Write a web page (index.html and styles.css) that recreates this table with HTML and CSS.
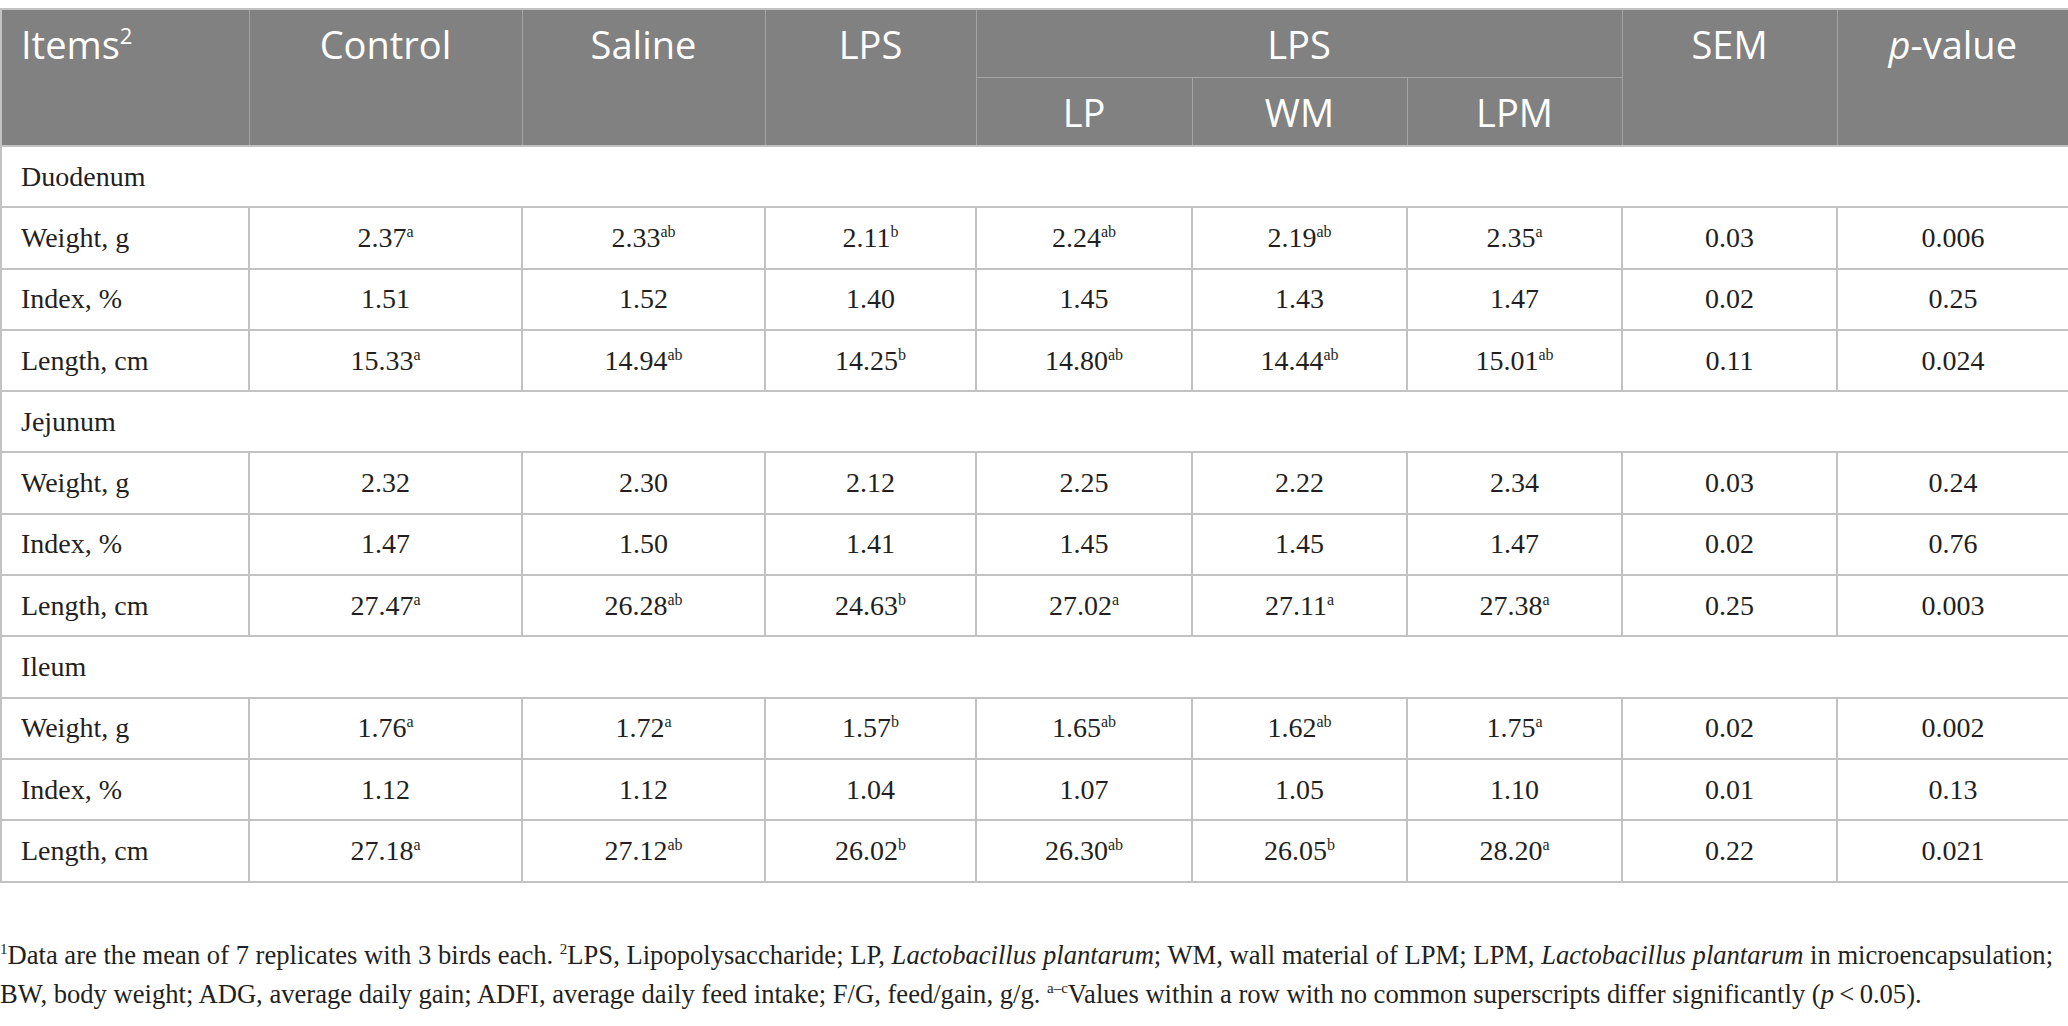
FILE: index.html
```html
<!DOCTYPE html>
<html lang="en">
<head>
  <meta charset="UTF-8" />
  <title>Intestinal development</title>
  <link rel="stylesheet" href="styles.css">
</head>
<body>
  <table class="data">
    <colgroup>
      <col style="width:248px">
      <col style="width:273px">
      <col style="width:243px">
      <col style="width:211px">
      <col style="width:216px">
      <col style="width:215px">
      <col style="width:215px">
      <col style="width:215px">
      <col style="width:232px">
    </colgroup>
    <thead>
      <tr>
        <th rowspan="2" class="first">Items<sup>2</sup></th>
        <th rowspan="2">Control</th>
        <th rowspan="2">Saline</th>
        <th rowspan="2">LPS</th>
        <th colspan="3">LPS</th>
        <th rowspan="2">SEM</th>
        <th rowspan="2"><i>p</i>-value</th>
      </tr>
      <tr>
        <th>LP</th>
        <th>WM</th>
        <th>LPM</th>
      </tr>
    </thead>
    <tbody>
      <tr class="group"><td colspan="9">Duodenum</td></tr>
      <tr>
        <td>Weight, g</td>
        <td>2.37<sup>a</sup></td><td>2.33<sup>ab</sup></td><td>2.11<sup>b</sup></td>
        <td>2.24<sup>ab</sup></td><td>2.19<sup>ab</sup></td><td>2.35<sup>a</sup></td>
        <td>0.03</td><td>0.006</td>
      </tr>
      <tr>
        <td>Index, %</td>
        <td>1.51</td><td>1.52</td><td>1.40</td>
        <td>1.45</td><td>1.43</td><td>1.47</td>
        <td>0.02</td><td>0.25</td>
      </tr>
      <tr>
        <td>Length, cm</td>
        <td>15.33<sup>a</sup></td><td>14.94<sup>ab</sup></td><td>14.25<sup>b</sup></td>
        <td>14.80<sup>ab</sup></td><td>14.44<sup>ab</sup></td><td>15.01<sup>ab</sup></td>
        <td>0.11</td><td>0.024</td>
      </tr>
      <tr class="group"><td colspan="9">Jejunum</td></tr>
      <tr>
        <td>Weight, g</td>
        <td>2.32</td><td>2.30</td><td>2.12</td>
        <td>2.25</td><td>2.22</td><td>2.34</td>
        <td>0.03</td><td>0.24</td>
      </tr>
      <tr>
        <td>Index, %</td>
        <td>1.47</td><td>1.50</td><td>1.41</td>
        <td>1.45</td><td>1.45</td><td>1.47</td>
        <td>0.02</td><td>0.76</td>
      </tr>
      <tr>
        <td>Length, cm</td>
        <td>27.47<sup>a</sup></td><td>26.28<sup>ab</sup></td><td>24.63<sup>b</sup></td>
        <td>27.02<sup>a</sup></td><td>27.11<sup>a</sup></td><td>27.38<sup>a</sup></td>
        <td>0.25</td><td>0.003</td>
      </tr>
      <tr class="group"><td colspan="9">Ileum</td></tr>
      <tr>
        <td>Weight, g</td>
        <td>1.76<sup>a</sup></td><td>1.72<sup>a</sup></td><td>1.57<sup>b</sup></td>
        <td>1.65<sup>ab</sup></td><td>1.62<sup>ab</sup></td><td>1.75<sup>a</sup></td>
        <td>0.02</td><td>0.002</td>
      </tr>
      <tr>
        <td>Index, %</td>
        <td>1.12</td><td>1.12</td><td>1.04</td>
        <td>1.07</td><td>1.05</td><td>1.10</td>
        <td>0.01</td><td>0.13</td>
      </tr>
      <tr>
        <td>Length, cm</td>
        <td>27.18<sup>a</sup></td><td>27.12<sup>ab</sup></td><td>26.02<sup>b</sup></td>
        <td>26.30<sup>ab</sup></td><td>26.05<sup>b</sup></td><td>28.20<sup>a</sup></td>
        <td>0.22</td><td>0.021</td>
      </tr>
    </tbody>
  </table>

  <p class="note">
    <sup>1</sup>Data are the mean of 7 replicates with 3 birds each. <sup>2</sup>LPS, Lipopolysaccharide; LP, <i>Lactobacillus plantarum</i>; WM, wall material of LPM; LPM, <i>Lactobacillus plantarum</i> in microencapsulation; BW, body weight; ADG, average daily gain; ADFI, average daily feed intake; F/G, feed/gain, g/g. <sup>a–c</sup>Values within a row with no common superscripts differ significantly (<i>p</i>&#8201;&lt;&#8201;0.05).
  </p>
</body>
</html>
```

FILE: styles.css
```css
:root {
  --head-bg: #808180;
  --head-line: #a3a3a3;
  --body-line: #c2c2c2;
  --ink: #231f20;
}
* {
  box-sizing: border-box;
}
body {
  margin: 0;
  padding-top: 8px;
  background: #fff;
  color: var(--ink);
  font-family: "Liberation Serif", "Times New Roman", serif;
}
.data {
  width: 2068px;
  table-layout: fixed;
  border-collapse: collapse;
  border: 2px solid var(--body-line);
}
.data th {
  background: var(--head-bg);
  color: #fff;
  font-family: "Open Sans", "Noto Sans", sans-serif;
  font-weight: 400;
  font-size: 38px;
  line-height: 49px;
  padding: 10px 19px 8px;
  text-align: center;
  vertical-align: top;
  border: 1px solid var(--head-line);
}
.data th.first {
  text-align: left;
}
.data th sup {
  font-size: 22px;
  vertical-align: 15px;
  line-height: 0;
}
.data td {
  height: 61.3px;
  padding: 0 19px;
  font-size: 28px;
  text-align: center;
  vertical-align: middle;
  border: 2px solid var(--body-line);
}
.data td:first-child {
  text-align: left;
}
.data td sup {
  font-size: 16px;
  vertical-align: 10px;
  line-height: 0;
}
.note {
  margin: 53px 0 0;
  font-size: 26.6px;
  line-height: 39px;
}
.note sup {
  font-size: 15px;
  vertical-align: 10px;
  line-height: 0;
}
```
